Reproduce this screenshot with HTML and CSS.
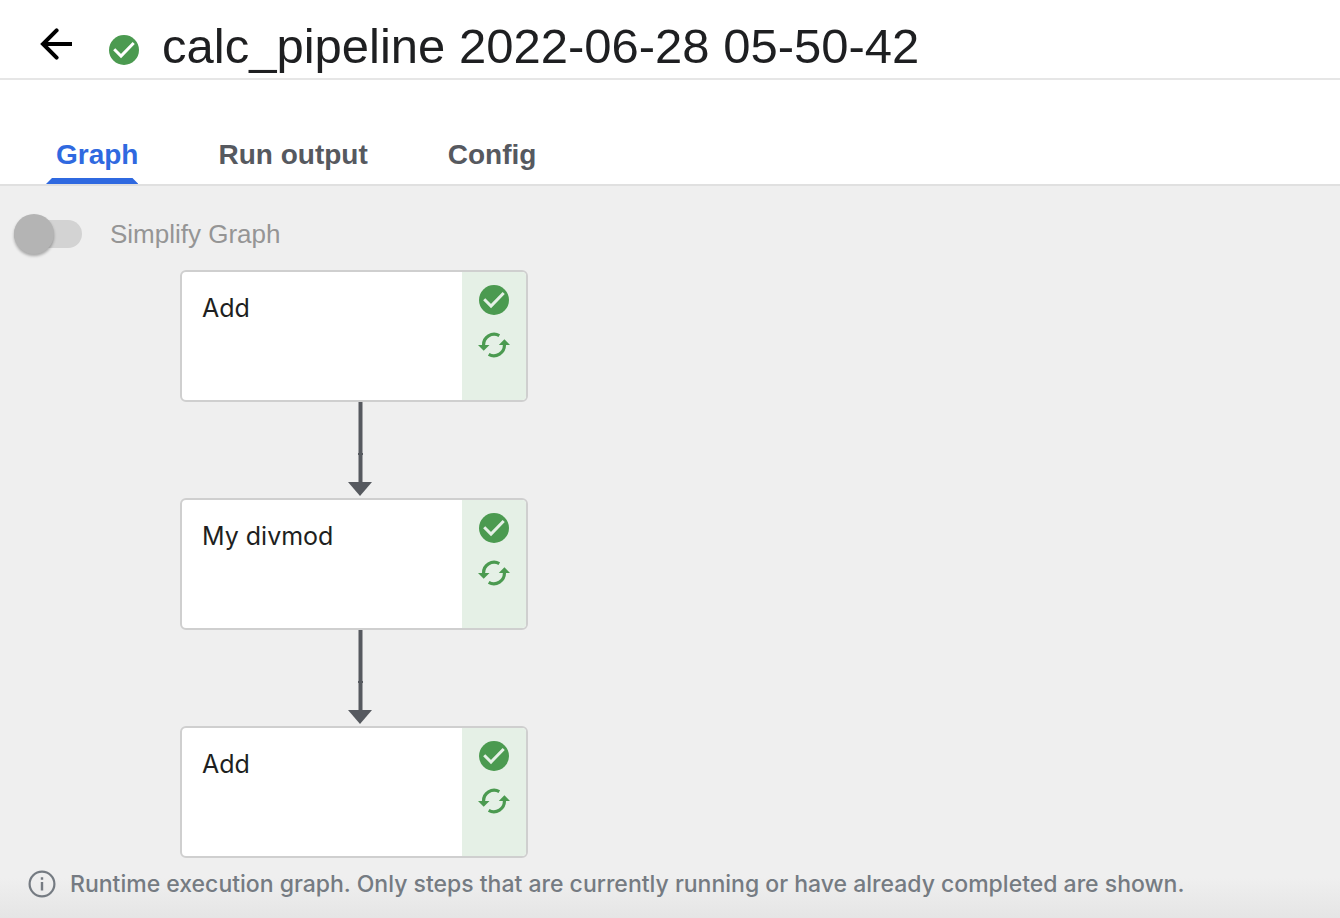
FILE: index.html
```html
<!DOCTYPE html>
<html lang="en">
<head>
<meta charset="utf-8">
<title>calc_pipeline 2022-06-28 05-50-42</title>
<link rel="stylesheet" href="styles.css">
</head>
<body>
<svg class="symbols" aria-hidden="true">
  <symbol id="check" viewBox="0 0 30 30">
    <circle cx="15" cy="15" r="15" fill="#4b9a50"/>
    <path d="M5.2 14.3 L12 21 L24.7 8" fill="none" stroke="currentColor" stroke-width="3"/>
  </symbol>
  <symbol id="cycle" viewBox="0 0 32 26">
    <g fill="none" stroke="#4b9a50" stroke-width="3.2">
      <path d="M21.3 3.6 A10.6 10.6 0 0 0 5.6 13.5"/>
      <path d="M10.7 22.4 A10.6 10.6 0 0 0 26.4 12.5"/>
    </g>
    <path d="M0 13 H11.5 L5.7 18.8 Z M20.8 13 H32 L26.4 7.2 Z" fill="#4b9a50"/>
  </symbol>
  <symbol id="edge" viewBox="0 0 24 96">
    <path d="M12.5 0 V82" stroke="#56595f" stroke-width="4"/>
    <path d="M10 52 H15" stroke="#56595f" stroke-width="2"/>
    <path d="M0 80 H24 L12 94 Z" fill="#56595f"/>
  </symbol>
</svg>

<header class="header">
  <button class="back" type="button" aria-label="Back">
    <svg width="32" height="32" viewBox="0 0 32 32" fill="none" stroke="#000" stroke-width="4"><path d="M32 16 H3"/><path d="M16.6 2.4 L3 16 L16.6 29.6" stroke-linecap="round"/></svg>
  </button>
  <svg class="icon header-status" role="img" aria-label="Succeeded"><use href="#check"/></svg>
  <h1 class="title">calc_pipeline 2022-06-28 05-50-42</h1>
</header>

<nav class="tabs">
  <button class="tab tab-active" type="button">Graph</button>
  <button class="tab" type="button">Run output</button>
  <button class="tab" type="button">Config</button>
</nav>

<main class="panel">
  <div class="toggle">
    <input class="switch" type="checkbox" id="simplify" disabled>
    <label for="simplify">Simplify Graph</label>
  </div>

  <div class="graph">
    <article class="node">
      <div class="node-name">Add</div>
      <div class="node-status">
        <svg class="icon"><use href="#check"/></svg>
        <svg class="cycle"><use href="#cycle"/></svg>
      </div>
    </article>
    <svg class="edge"><use href="#edge"/></svg>
    <article class="node">
      <div class="node-name">My divmod</div>
      <div class="node-status">
        <svg class="icon"><use href="#check"/></svg>
        <svg class="cycle"><use href="#cycle"/></svg>
      </div>
    </article>
    <svg class="edge"><use href="#edge"/></svg>
    <article class="node">
      <div class="node-name">Add</div>
      <div class="node-status">
        <svg class="icon"><use href="#check"/></svg>
        <svg class="cycle"><use href="#cycle"/></svg>
      </div>
    </article>
  </div>

  <footer class="note">
    <svg width="28" height="28" viewBox="0 0 28 28" fill="none" stroke="#757b82"><circle cx="14" cy="14" r="12.4" stroke-width="2.2"/><path d="M14 12 V20.5 M14 7.3 V9.8" stroke-width="2.4"/></svg>
    <p class="note-text">Runtime execution graph. Only steps that are currently running or have already completed are shown.</p>
  </footer>
</main>
</body>
</html>
```

FILE: styles.css
```css
* {
  box-sizing: border-box;
}

body {
  margin: 0;
  min-height: 100vh;
  display: flex;
  flex-direction: column;
  background: #fff;
  color: #1e1f21;
  font-family: "Liberation Sans", Arial, sans-serif;
}

button {
  padding: 0;
  border: 0;
  background: none;
  font: inherit;
  color: inherit;
}

svg {
  display: block;
  flex: none;
}

.symbols {
  position: absolute;
  width: 0;
  height: 0;
}

.icon {
  width: 30px;
  height: 30px;
}

.header {
  display: flex;
  align-items: flex-start;
  height: 80px;
  padding: 18px 40px 0;
  border-bottom: 2px solid #e6e6e6;
}

.back {
  margin: 10px 37px 0 0;
}

.header-status {
  margin: 17px 23px 0 0;
  color: #fff;
}

.title {
  margin: 0;
  font-size: 49px;
  line-height: 56px;
  font-weight: 400;
  white-space: nowrap;
}

.tabs {
  display: flex;
  gap: 80px;
  height: 106px;
  padding: 44px 56px 0;
  border-bottom: 2px solid #e0e0e0;
  color: #56595f;
  font-size: 28px;
  font-weight: 700;
  line-height: 62px;
}

.tab {
  position: relative;
  white-space: nowrap;
}

.tab-active {
  color: #2f69e0;
}

.tab-active::after {
  content: "";
  position: absolute;
  left: -10px;
  right: 0;
  bottom: 0;
  height: 6px;
  background: #2f69e0;
  clip-path: polygon(6px 0, calc(100% - 6px) 0, 100% 100%, 0 100%);
}

.panel {
  flex: 1;
  padding: 24px 14px 0;
  background: linear-gradient(to top, #e5e5e5, #efefef 40px);
}

.toggle {
  display: flex;
  align-items: center;
  gap: 28px;
  height: 48px;
  color: #959595;
  font-size: 26px;
}

.switch {
  appearance: none;
  display: flex;
  align-items: center;
  width: 68px;
  height: 28px;
  margin: 0;
  border-radius: 14px;
  background: #d3d3d3;
}

.switch::before {
  content: "";
  flex: none;
  width: 40px;
  height: 40px;
  border-radius: 50%;
  background: #b4b4b4;
  box-shadow: 0 2px 3px rgba(0, 0, 0, 0.3);
}

.graph {
  width: 348px;
  margin: 12px 0 0 166px;
}

.node {
  display: flex;
  height: 132px;
  border: 2px solid #cfcfcf;
  border-radius: 6px;
  overflow: hidden;
  background: #fff;
}

.node-name {
  flex: 1;
  padding: 20px;
  font-family: Inter, sans-serif;
  font-size: 25px;
  line-height: 32px;
}

.node-status {
  display: flex;
  flex-direction: column;
  align-items: center;
  gap: 17px;
  width: 64px;
  padding-top: 13px;
  background: #e5f0e6;
  color: #e5f0e6;
}

.cycle {
  width: 32px;
  height: 26px;
}

.edge {
  width: 24px;
  height: 96px;
  margin-left: 168px;
}

.note {
  display: flex;
  align-items: center;
  gap: 14px;
  padding: 10px 14px 0;
  color: #757b82;
}

.note-text {
  margin: 0;
  font-family: Inter, sans-serif;
  font-size: 23px;
  font-weight: 500;
  line-height: 32px;
}
```
